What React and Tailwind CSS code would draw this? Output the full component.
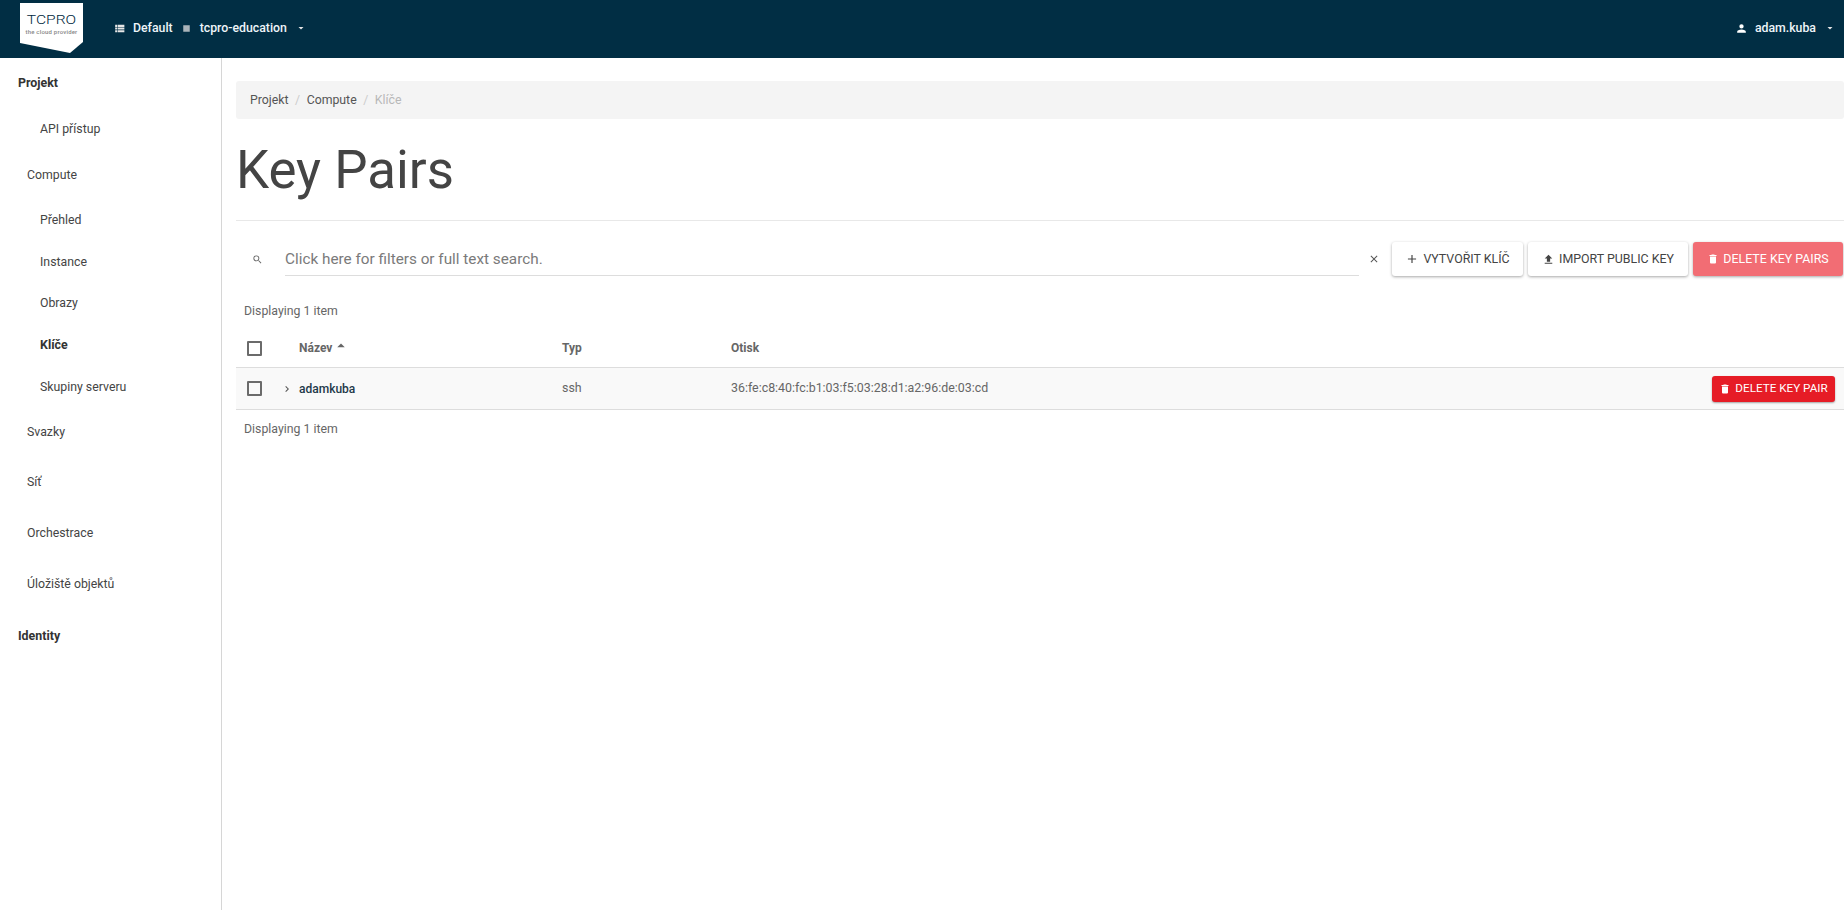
const P = {
  search: "M9.5,3A6.5,6.5 0 0,1 16,9.5C16,11.11 15.41,12.59 14.44,13.73L14.71,14H15.5L20.5,19L19,20.5L14,15.5V14.71L13.73,14.44C12.59,15.41 11.11,16 9.5,16A6.5,6.5 0 0,1 3,9.5A6.5,6.5 0 0,1 9.5,3M9.5,5C7,5 5,7 5,9.5C5,12 7,14 9.5,14C12,14 14,12 14,9.5C14,7 12,5 9.5,5Z",
  close: "M19,6.41L17.59,5L12,10.59L6.41,5L5,6.41L10.59,12L5,17.59L6.41,19L12,13.41L17.59,19L19,17.59L13.41,12L19,6.41Z",
  plus: "M19,13H13V19H11V13H5V11H11V5H13V11H19V13Z",
  upload: "M9,16V10H5L12,3L19,10H15V16H9M5,20V18H19V20H5Z",
  trash: "M19,4H15.5L14.5,3H9.5L8.5,4H5V6H19M6,19A2,2 0 0,0 8,21H16A2,2 0 0,0 18,19V7H6V19Z",
  user: "M12,4A4,4 0 0,1 16,8A4,4 0 0,1 12,12A4,4 0 0,1 8,8A4,4 0 0,1 12,4M12,14C16.42,14 20,15.79 20,18V20H4V18C4,15.79 7.58,14 12,14Z",
  down: "M7,10L12,15L17,10H7Z",
  up: "M7,15L12,10L17,15H7Z",
  chevron: "M8.59,16.58L13.17,12L8.59,7.41L10,6L16,12L10,18L8.59,16.58Z",
  list: "M9,5V9H21V5M9,19H21V15H9M9,14H21V10H9M4,9H8V5H4M4,19H8V15H4M4,14H8V10H4V14Z",
  stop: "M18,18H6V6H18V18Z",
};

function Icon({ d, className }) {
  return (
    <svg viewBox="0 0 24 24" fill="currentColor" className={"shrink-0 " + className}>
      <path d={d} />
    </svg>
  );
}

function Checkbox() {
  return <span className="block w-[15px] h-[15px] rounded-[1px] border-2 border-[#6b6b6b] bg-transparent" />;
}

function Logo() {
  return (
    <div className="relative w-[63px] h-[50px] ml-5 mt-[3px] self-start shrink-0">
      <svg viewBox="0 0 63 50" className="absolute inset-0 w-full h-full">
        <polygon points="0,0 63,0 63,39 50,50 0,40" fill="#ffffff" />
      </svg>
      <div className="absolute left-0 right-0 top-[10px] text-center text-[12px] leading-[15px] font-light text-[#00283c] scale-x-[1.3]">TCPRO</div>
      <div className="absolute left-0 right-0 top-[25px] text-center text-[6px] leading-[8px] text-[#888888] tracking-[0.2px]">the cloud provider</div>
    </div>
  );
}

function Header() {
  return (
    <header className="h-[58px] shrink-0 bg-[#012e44] flex items-center text-[12.3px] font-medium pb-[2px]">
      <Logo />
      <Icon d={P.list} className="w-[13px] h-[13px] ml-[30px] text-[#e6e6e6]" />
      <span className="ml-[7px] text-[#eef5f9]">Default</span>
      <Icon d={P.stop} className="w-[13px] h-[13px] ml-[7px] text-[#aab4ba]" />
      <span className="ml-[7px] text-[#eef5f9]">tcpro-education</span>
      <Icon d={P.down} className="w-3 h-3 ml-[8px] text-[#e6e6e6]" />
      <div className="ml-auto flex items-center mr-2">
        <Icon d={P.user} className="w-[13px] h-[13px] text-white" />
        <span className="ml-[7px] text-[#eef5f9]">adam.kuba</span>
        <Icon d={P.down} className="w-3 h-3 ml-2 text-[#e6e6e6]" />
      </div>
    </header>
  );
}

const NAV = [
  { t: "Projekt", k: "head", h: 49 },
  { t: "API přístup", k: "sub", h: 43 },
  { t: "Compute", k: "group", h: 49 },
  { t: "Přehled", k: "sub", h: 41 },
  { t: "Instance", k: "sub", h: 42 },
  { t: "Obrazy", k: "sub", h: 41 },
  { t: "Klíče", k: "active", h: 43 },
  { t: "Skupiny serveru", k: "sub", h: 41 },
  { t: "Svazky", k: "group", h: 49 },
  { t: "Síť", k: "group", h: 50 },
  { t: "Orchestrace", k: "group", h: 53 },
  { t: "Úložiště objektů", k: "group", h: 49 },
  { t: "Identity", k: "head", h: 55 },
];

function NavItem({ item }) {
  const cls = {
    head: "pl-[18px] font-bold text-[12.4px] text-[#333333]",
    group: "pl-[27px] text-[12.3px] text-[#444444]",
    sub: "pl-10 text-[12.3px] text-[#444444]",
    active: "pl-10 font-bold text-[12.4px] text-[#333333]",
  }[item.k];
  return (
    <li style={{ height: item.h }} className={"flex items-center " + cls}>
      {item.t}
    </li>
  );
}

function Sidebar() {
  return (
    <aside className="w-[222px] shrink-0 border-r border-[#d6d6d6] pt-px">
      <ul>
        {NAV.map((n) => (
          <NavItem key={n.t} item={n} />
        ))}
      </ul>
    </aside>
  );
}

function ToolButton({ icon, iconClass, label, className }) {
  return (
    <button className={"h-[34px] rounded-[3px] flex items-center justify-center gap-[4px] text-[12.4px] font-normal uppercase shadow-[0_1px_3px_rgba(0,0,0,0.35)] " + className}>
      <Icon d={icon} className={iconClass} />
      {label}
    </button>
  );
}

function Content() {
  return (
    <main className="flex-1 min-w-0 pl-[14px] pt-[23px]">
      <nav className="h-[38px] bg-[#f4f4f4] rounded-[3px] flex items-center pl-[14px] text-[12.3px] text-[#555555]">
        <span>Projekt</span>
        <span className="mx-[6.5px] text-[#cccccc]">/</span>
        <span>Compute</span>
        <span className="mx-[6.5px] text-[#cccccc]">/</span>
        <span className="text-[#b8b8b8]">Klíče</span>
      </nav>
      <h1 className="text-[52.8px] leading-[62px] font-normal text-[#444444] mt-[20px] pb-[19px] border-b border-[#e8e8e8]">Key Pairs</h1>
      <div className="flex items-center mt-[21px] h-[34px]">
        <Icon d={P.search} className="w-[11px] h-[11px] ml-[16px] text-[#666666]" />
        <div className="ml-[22px] w-[1074px] h-full border-b border-[#dddddd] flex items-center pt-px text-[15.3px] text-[#7a7a7a]">
          Click here for filters or full text search.
        </div>
        <Icon d={P.close} className="w-3 h-3 ml-[9px] text-[#555555]" />
        <ToolButton icon={P.plus} iconClass="w-[14px] h-[14px]" label="Vytvořit klíč" className="ml-[12px] w-[131px] bg-white text-[#444444]" />
        <ToolButton icon={P.upload} iconClass="w-[13px] h-[13px]" label="Import public key" className="ml-[5px] w-[160px] bg-white text-[#444444]" />
        <ToolButton icon={P.trash} iconClass="w-3 h-3" label="Delete key pairs" className="ml-[5px] w-[150px] bg-[#f26d74] text-white" />
      </div>
      <p className="text-[12.3px] leading-[16px] text-[#666666] pl-2 mt-[27px]">Displaying 1 item</p>
      <div className="flex items-center h-[37px] mt-[12px] pb-[2px] text-[12px] font-bold text-[#666666] border-b border-[#dddddd]">
        <div className="w-[62px] pl-[11px]"><Checkbox /></div>
        <div className="w-[264px] flex items-center pl-px">
          Název
          <Icon d={P.up} className="w-[18px] h-[18px] -mt-[6px]" />
        </div>
        <div className="w-[169px]">Typ</div>
        <div>Otisk</div>
      </div>
      <div className="flex items-center h-[42px] bg-[#f9f9f9] border-b border-[#dddddd] text-[12.4px] text-[#666666]">
        <div className="w-[44px] pl-[11px]"><Checkbox /></div>
        <div className="w-[18px]"><Icon d={P.chevron} className="w-3 h-3 ml-[1px] text-[#555555]" /></div>
        <div className="w-[264px] pl-px text-[12px] font-medium text-[#1f3a4a]">adamkuba</div>
        <div className="w-[169px]">ssh</div>
        <div>36:fe:c8:40:fc:b1:03:f5:03:28:d1:a2:96:de:03:cd</div>
        <button className="ml-auto mr-[9px] w-[123px] h-[26px] rounded-[3px] bg-[#e61c26] text-white text-[11.7px] font-normal uppercase flex items-center justify-center gap-[4px] shadow-[0_1px_2px_rgba(0,0,0,0.35)]">
          <Icon d={P.trash} className="w-3 h-3" />
          Delete key pair
        </button>
      </div>
      <p className="text-[12.3px] leading-[16px] text-[#666666] pl-2 mt-[11px]">Displaying 1 item</p>
    </main>
  );
}

export default function App() {
  return (
    <div className="h-[910px] flex flex-col bg-white overflow-hidden font-['Roboto',sans-serif]">
      <Header />
      <div className="flex flex-1 min-h-0">
        <Sidebar />
        <Content />
      </div>
    </div>
  );
}
